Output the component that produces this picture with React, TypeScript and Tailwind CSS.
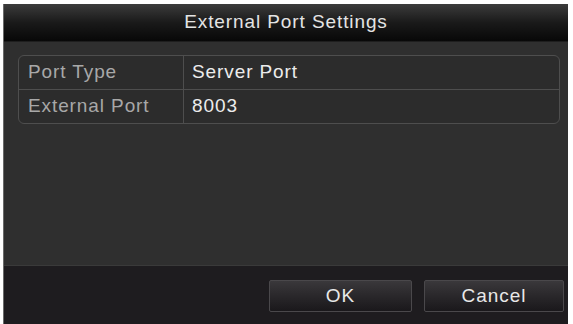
export default function App() {
  return (
    <div className="w-[573px] h-[324px] bg-white pt-[4px] pl-[3px] pr-[5px] overflow-hidden" style={{ fontFamily: '"Liberation Sans", Arial, sans-serif' }}>
      <div className="h-[320px] flex flex-col bg-[#2e2e2e] border-l border-[#6a6a6a]">
        <div className="h-[38px] flex items-center justify-center bg-gradient-to-b from-[#3c3c3c] via-[#1a1a1a] to-[#080808] border-b border-[#1e1e1e] text-[#e4e4e4] text-[19px] tracking-[0.9px]">
          External Port Settings
        </div>
        <div className="flex-1 bg-[#2f2f2f] pt-[13px] pl-[14px] pr-[8px]">
          <div className="rounded-[6px] border border-[#4e4e4e] bg-[#2c2c2c]">
            <div className="flex h-[34px] border-b border-[#4e4e4e]">
              <div className="w-[165px] border-r border-[#4e4e4e] flex items-center pl-[9px] text-[19px] tracking-[0.9px] text-[#a8a8a8]">Port Type</div>
              <div className="flex-1 flex items-center pl-[8px] text-[19px] tracking-[0.9px] text-[#ececec]">Server Port</div>
            </div>
            <div className="flex h-[33px]">
              <div className="w-[165px] border-r border-[#4e4e4e] flex items-center pl-[9px] text-[19px] tracking-[0.9px] text-[#a8a8a8]">External Port</div>
              <div className="flex-1 flex items-center pl-[8px] text-[19px] tracking-[0.9px] text-[#ececec]">8003</div>
            </div>
          </div>
        </div>
        <div className="h-[59px] bg-[#1e1c1f] border-t border-[#3a3a3a] flex justify-end items-start pt-[14px] pr-[4px] gap-[12px]">
          <button className="w-[143px] h-[32px] bg-gradient-to-b from-[#3a383b] to-[#1a181b] border border-[#4a484b] rounded-[2px] text-[#e8e8e8] text-[19px] tracking-[1px]">OK</button>
          <button className="w-[140px] h-[32px] bg-gradient-to-b from-[#3a383b] to-[#1a181b] border border-[#4a484b] rounded-[2px] text-[#e8e8e8] text-[19px] tracking-[1px]">Cancel</button>
        </div>
      </div>
    </div>
  );
}
